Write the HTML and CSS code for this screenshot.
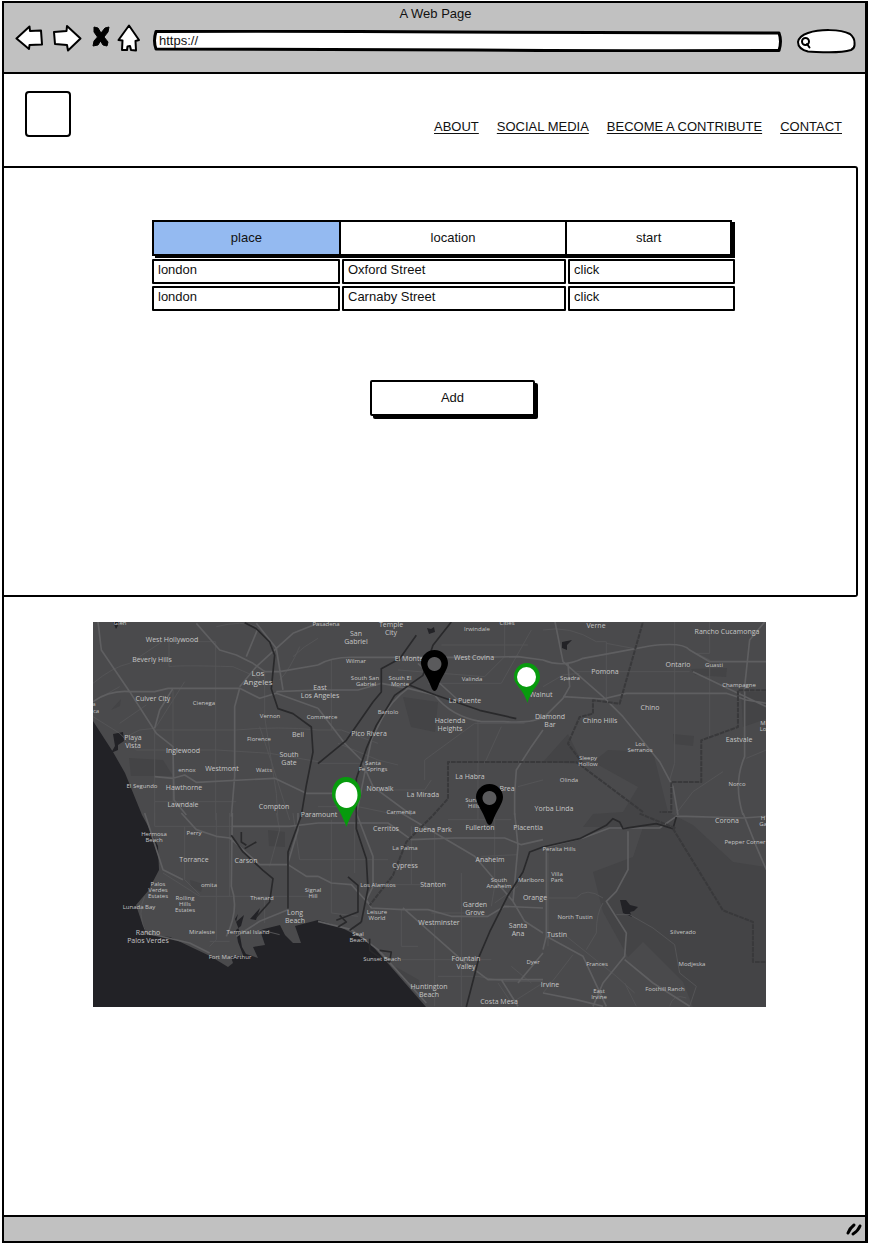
FILE: index.html
```html
<!DOCTYPE html>
<html lang="en">
<head>
<meta charset="utf-8">
<meta name="viewport" content="width=device-width, initial-scale=1">
<title>A Web Page</title>
<link rel="stylesheet" href="styles.css">
</head>
<body>
<div class="browser">
  <header class="chrome">
    <div class="chrome-title">A Web Page</div>
    <div class="toolbar">
      <button class="tool" type="button" aria-label="Back"><svg width="28" height="26" viewBox="0 0 28 26"><path class="ink" d="M1.500 13.500 14.500 1.500 15 6 26 5.500 27 19.500 14.500 20 14 24Z"/></svg></button>
      <button class="tool tool-forward" type="button" aria-label="Forward"><svg width="30" height="28" viewBox="0 0 30 28"><path class="ink" d="M2 8 14.500 7 15 2 28.500 14.500 16 26.500 15 21 3 20Z"/></svg></button>
      <button class="tool tool-stop" type="button" aria-label="Stop"><svg width="18" height="22" viewBox="0 0 18 22"><path class="solid" d="M2 1 6 2 9 7 13 2 17 1 16 6 12 11 16 16 15 20 11 19 8.500 15 6 19 1 20 2 15 5.500 11 2 6Z"/></svg></button>
      <button class="tool" type="button" aria-label="Home"><svg width="24" height="28" viewBox="0 0 24 28"><path class="ink" d="M12 1.500 22 16 18.500 17 19 26.500 14 26 13 22 10.500 22.500 10 26 5 26 5.500 16.500 1.500 16Z"/></svg></button>
      <div class="field address">
        <svg class="outline" viewBox="0 0 628 22" preserveAspectRatio="none" aria-hidden="true"><path class="ink" d="M3 1.500Q160 1 300 2T625 3Q628 11 625 20.500Q460 21 320 20T3 19Q0 11 3 1.500Z"/></svg>
        <input class="box" type="text" aria-label="Address" value="https://">
      </div>
      <div class="field search">
        <svg class="outline" viewBox="0 0 60 25" preserveAspectRatio="none" aria-hidden="true"><path class="ink" d="M12 4C24 0 44 0 54 5Q59 9 58.500 15Q59 19 55 21C42 25 26 23 12 22.500Q2 20 2 13Q3 7 12 4Z"/><circle class="ink" cx="9.500" cy="12.500" r="3.500"/><path class="ink" d="M11 15 13.500 18.500"/></svg>
        <input class="box" type="search" aria-label="Search">
      </div>
    </div>
  </header>

  <div class="page">
    <header class="site-header">
      <div class="logo"></div>
      <nav class="nav">
        <a href="#about">ABOUT</a>
        <a href="#social">SOCIAL MEDIA</a>
        <a href="#contribute">BECOME A CONTRIBUTE</a>
        <a href="#contact">CONTACT</a>
      </nav>
    </header>

    <section class="panel">
      <table class="places">
        <thead><tr><th class="active">place</th><th>location</th><th>start</th></tr></thead>
        <tbody>
          <tr><td>london</td><td>Oxford Street</td><td>click</td></tr>
          <tr><td>london</td><td>Carnaby Street</td><td>click</td></tr>
        </tbody>
      </table>
      <div class="actions"><button class="add" type="button">Add</button></div>
    </section>

    <figure class="map">
      <svg viewBox="0 0 673 385" role="img" aria-label="Map of Los Angeles">
        <rect class="land" width="673" height="385"/>
        <path class="park" d="M500 192 530 190 545 165 500 140 515 128 560 130 575 190 600 203 640 240 673 245V385H600L590 360 550 320 535 335 510 290 500 250 540 235 550 205 490 205ZM450 140 490 142 475 112ZM36 136 70 138 80 154 38 154ZM310 75 345 80 342 110 318 105ZM598 47 634 46 633 55 602 53ZM580 112 601 114 600 124 581 122ZM648 70H673V97L650 105ZM18 88 28 77 27 84ZM97 258 110 262 108 270 98 265ZM175 208 192 210 192 225 176 224ZM303 345 326 358 328 368 309 356Z"/>
        <path class="water" d="M0 99 20 130 32 151 49 193 55 204 65 224 66 248 55 269 43 283 48 298 55 313 77 315 100 326 117 334 135 345 140 341 138 335 150 333 145 320 143 308 148 304 151 293 143 300 145 292 142 297 146 308 149 325 153 332 165 336 160 325 172 323 167 308 187 303 192 313 200 321 208 321 202 304 225 298 245 304 275 319 292 338 312 361 333 385H0ZM20 112 30 110 31 119 25 123 25 128 18 131 22 124ZM20 0H27L23 7ZM469 20 479 18 474 23 474 28 469 26ZM527 278 533 278 537 283 545 285 541 289 537 290 539 295 530 291ZM334 6 338 7 341 5 342 10 336 12ZM157 297 167 286 163 298Z"/>

        <g class="minor" transform="translate(0 -2) scale(.3333)">
          <path d="M228 50V140Q260 135 420 140L500 175M0 190Q60 140 110 130L230 50M228 65H368V600M0 290 80 340 130 390H370L530 400 675 425M185 330H430Q560 318 675 330M185 330V600M240 210V560M185 325 140 330 100 350M430 545H185M515 150V290L550 520 555 600M500 320 540 440 590 600M0 245 80 200M370 20Q450 0 490 20M620 80Q590 150 560 180M675 55Q630 80 600 110"/>
          <path d="M80 310 160 255M190 320 275 185"/>
        </g>
        <g class="minor" transform="translate(225 -2) scale(.3333)">
          <path d="M40 120V330M0 330H70L180 370M0 430H160M60 370 180 420 240 435M320 480V420L470 310H620M480 300V600M240 150 500 170 560 110V0M370 75H630M550 320 500 430M0 560H120L240 585M330 190 550 190 640 30M140 510H320L340 480M600 500 675 480"/>
        </g>
        <g class="minor" transform="translate(450 -2) scale(.3333)">
          <path d="M0 30Q80 15 160 65H190V240M190 70 270 85M100 155H440M395 0V430L380 480M0 200 60 165 110 160M500 0V100H460L500 120V350M670 390 610 415M540 455 450 515 400 580"/>
        </g>
        <g class="minor" transform="translate(0 191) scale(.3333)">
          <path d="M185 0V40H600M370 0V380L350 400M550 0 560 50 530 160M600 0 620 140H675M210 180 320 250H675M275 40V200L320 245M155 250Q130 300 160 360M350 385H410M410 0V250M515 250V330M500 350 560 365"/>
        </g>
        <g class="minor" transform="translate(225 191) scale(.3333)">
          <path d="M40 20V300L120 310M0 140H210M110 30V180M180 215H390M280 40V215M350 50V580M430 180V580M250 440H520M250 290V400H300M530 0V220L520 280M390 20H580M360 490H480L560 505H675M540 510 580 570 675 510M440 300H340M600 220 530 270M580 460 640 510M490 130 600 125"/>
        </g>
        <g class="minor" transform="translate(450 191) scale(.3333)">
          <path d="M15 255H100Q130 220 180 255M15 120V400M180 270Q160 300 160 360L130 410M70 370 220 490 275 540M220 305H260L330 345 395 395 410 480 460 520 440 580M90 425 40 490 0 540M280 580 245 510M380 580Q390 540 430 555"/>
        </g>

        <g class="road" transform="translate(0 -2) scale(.3333)">
          <path d="M15 5 25 90 110 215 190 340 240 380 243 540 280 585M310 10 380 90 430 105 480 130 515 155 560 155 675 135M0 245Q50 210 110 215H185L225 205H440L500 235 550 220 675 265M440 205 425 260 425 470 415 590M185 470 240 475 275 465 310 487 545 475 640 520H675M490 10 550 85 490 140 440 200M675 10 600 40 550 85 570 210M550 215 675 210M240 205 200 270 185 325M495 25 460 110"/>
        </g>
        <g class="road" transform="translate(225 -2) scale(.3333)">
          <path d="M0 135Q40 110 110 112H310L460 112 600 110 675 120M0 210 120 210 190 190 270 205 350 225Q400 290 490 305H560Q650 310 675 290M0 265 80 370 130 420 165 500 280 585M675 330 640 380 595 450 590 520 590 585M270 205Q220 240 190 300L160 360 140 460 115 585M300 130 420 240M0 520H120"/>
        </g>
        <g class="road" transform="translate(450 -2) scale(.3333)">
          <path d="M0 120Q60 145 120 115L230 95 320 78Q420 65 440 90L500 125H670M60 230 180 237 250 220H550L610 240 670 250M35 0 60 125 180 230 240 290 350 425 390 500 405 585M670 0 620 60 605 200 605 410Q570 490 600 585M450 155 670 260M75 130 80 200 60 235 0 295"/>
        </g>
        <g class="road" transform="translate(0 191) scale(.3333)">
          <path d="M265 0 310 50 370 70 410 75 500 155 585 155 640 190 675 190M418 0 415 220Q440 290 400 370M415 40H590L675 30M615 0V50L585 150V290L500 325 430 370M155 0 210 170 270 200M160 360 290 390 350 420"/>
        </g>
        <g class="road" transform="translate(225 191) scale(.3333)">
          <path d="M115 0 165 130 165 220 145 260 160 285 255 290 330 290 400 310H510L560 280 675 285M0 30H210L280 80 410 75 560 75 610 95 675 80M250 0 470 130 585 265 620 325 675 360M255 285 430 440 510 500H675M0 190 40 210 100 215 150 270M0 325 100 350 180 410 325 570M590 0 600 100 585 265M550 500 600 580M675 420 600 510"/>
        </g>
        <g class="road" transform="translate(450 191) scale(.3333)">
          <path d="M0 105 120 75 200 45 350 45 400 10 430 10 600 15 670 10M600 0 640 100 670 170M10 110V370L120 430 190 580M255 55V170L220 235 190 265 215 305 250 360 245 430 180 510 150 580M245 440 330 510 440 580M10 370 0 410M0 540 100 560 180 580"/>
        </g>

        <g class="river" transform="scale(.3333)">
          <path d="M455 2 490 20 530 60 545 100 535 200 555 260 600 275 655 315 660 390 640 490 625 580 585 690V860"/>
          <path d="M675 425 760 355 840 240 865 210 865 140 920 110 970 40M1075 0 1020 70 990 160 905 220 850 310 820 380 790 470V620L820 710 825 800 805 900M950 190 1030 220 1160 265 1270 290M1350 675 1310 690 1290 750 1245 820 1190 930 1160 1000 1120 1155M1350 675 1460 650 1540 610 1560 590 1580 600 1590 620 1690 605 1740 620 1750 585"/>
          <path d="M415 640 450 690 510 745 540 770 530 840 490 885M445 630V660L460 670M455 680 490 660M765 765 795 790V870L730 895M740 880 760 900 735 915M830 950 830 985 865 1010 890 1020 895 990 860 985M805 900 770 925"/>
        </g>
        <g class="border" transform="scale(.3333)">
          <path d="M2019 205H1935V315L1825 355V480H1735V570H1700M1650 570 1450 420H1065V530L1020 580 940 660 900 760 830 850M1470 425 1425 365 1460 285 1500 275V235L1580 245 1650 0M1640 575 1750 620M1740 620 1890 865 1980 900V1020H2019"/>
        </g>

        <g class="labels" transform="translate(-93 -622)">
          <g class="town">
            <text class="city" x="258" y="676">Los</text><text class="city" x="258" y="685">Angeles</text>
            <text x="172" y="642">West Hollywood</text><text x="152" y="662">Beverly Hills</text><text x="153" y="701">Culver City</text>
            <text x="133" y="740">Playa</text><text x="133" y="748">Vista</text><text x="183" y="753">Inglewood</text><text x="222" y="771">Westmont</text>
            <text x="184" y="790">Hawthorne</text><text x="183" y="807">Lawndale</text><text x="274" y="809">Compton</text><text x="298" y="737">Bell</text>
            <text x="289" y="757">South</text><text x="289" y="765">Gate</text><text x="320" y="690">East</text><text x="320" y="698">Los Angeles</text>
            <text x="356" y="636">San</text><text x="356" y="644">Gabriel</text><text x="391" y="627">Temple</text><text x="391" y="635">City</text>
            <text x="409" y="661">El Monte</text><text x="474" y="660">West Covina</text><text x="465" y="703">La Puente</text>
            <text x="450" y="723">Hacienda</text><text x="450" y="731">Heights</text><text x="369" y="736">Pico Rivera</text><text x="380" y="791">Norwalk</text>
            <text x="423" y="797">La Mirada</text><text x="470" y="779">La Habra</text><text x="507" y="791">Brea</text><text x="541" y="697">Walnut</text>
            <text x="550" y="719">Diamond</text><text x="550" y="727">Bar</text><text x="596" y="628">Verne</text><text x="605" y="674">Pomona</text>
            <text x="678" y="667">Ontario</text><text x="727" y="634">Rancho Cucamonga</text><text x="650" y="710">Chino</text><text x="600" y="723">Chino Hills</text>
            <text x="739" y="742">Eastvale</text><text x="554" y="811">Yorba Linda</text><text x="727" y="823">Corona</text><text x="319" y="817">Paramount</text>
            <text x="386" y="831">Cerritos</text><text x="433" y="832">Buena Park</text><text x="480" y="830">Fullerton</text><text x="528" y="830">Placentia</text>
            <text x="490" y="862">Anaheim</text><text x="405" y="868">Cypress</text><text x="433" y="887">Stanton</text><text x="535" y="900">Orange</text>
            <text x="475" y="907">Garden</text><text x="475" y="915">Grove</text><text x="439" y="925">Westminster</text><text x="518" y="928">Santa</text><text x="518" y="936">Ana</text>
            <text x="557" y="937">Tustin</text><text x="466" y="961">Fountain</text><text x="466" y="969">Valley</text><text x="550" y="987">Irvine</text>
            <text x="429" y="989">Huntington</text><text x="429" y="997">Beach</text><text x="499" y="1004">Costa Mesa</text>
            <text x="194" y="862">Torrance</text><text x="246" y="863">Carson</text><text x="295" y="915">Long</text><text x="295" y="923">Beach</text>
            <text x="148" y="935">Rancho</text><text x="148" y="943">Palos Verdes</text>
          </g>
          <g class="district">
            <text x="120" y="625">Glen</text><text x="94" y="706">a</text><text x="96" y="713">ca</text><text x="204" y="705">Cienega</text><text x="270" y="718">Vernon</text><text x="322" y="719">Commerce</text>
            <text x="259" y="741">Florence</text><text x="187" y="772">ennox</text><text x="264" y="772">Watts</text><text x="142" y="788">El Segundo</text>
            <text x="326" y="626">Pasadena</text><text x="356" y="663">Wilmar</text><text x="365" y="680">South San</text><text x="366" y="686">Gabriel</text>
            <text x="400" y="680">South El</text><text x="400" y="686">Monte</text><text x="477" y="631">Irwindale</text><text x="507" y="625">Cities</text>
            <text x="472" y="681">Valinda</text><text x="388" y="714">Bartolo</text><text x="373" y="765">Santa</text><text x="373" y="771">Fe Springs</text>
            <text x="401" y="814">Carmenita</text><text x="405" y="850">La Palma</text><text x="474" y="802">Sunny</text><text x="474" y="808">Hills</text>
            <text x="570" y="680">Spadra</text><text x="714" y="667">Guasti</text><text x="739" y="687">Champagne</text><text x="640" y="746">Los</text><text x="640" y="752">Serranos</text>
            <text x="588" y="760">Sleepy</text><text x="588" y="766">Hollow</text><text x="569" y="782">Olinda</text><text x="737" y="786">Norco</text>
            <text x="763" y="725">M</text><text x="763" y="731">Lo</text><text x="763" y="820">H</text><text x="763" y="826">Ga</text>
            <text x="745" y="844">Pepper Corner</text><text x="559" y="851">Peralta Hills</text><text x="557" y="876">Villa</text><text x="557" y="882">Park</text>
            <text x="499" y="882">South</text><text x="499" y="888">Anaheim</text><text x="531" y="882">Marlboro</text><text x="575" y="919">North Tustin</text>
            <text x="683" y="934">Silverado</text><text x="692" y="966">Modjeska</text><text x="665" y="991">Foothill Ranch</text><text x="597" y="966">Frances</text>
            <text x="533" y="964">Dyer</text><text x="599" y="993">East</text><text x="599" y="999">Irvine</text>
            <text x="154" y="836">Hermosa</text><text x="154" y="842">Beach</text><text x="194" y="835">Perry</text><text x="158" y="886">Palos</text><text x="158" y="892">Verdes</text><text x="158" y="898">Estates</text>
            <text x="185" y="900">Rolling</text><text x="185" y="906">Hills</text><text x="185" y="912">Estates</text><text x="209" y="887">omita</text><text x="262" y="900">Thenard</text>
            <text x="139" y="909">Lunada Bay</text><text x="202" y="934">Miraleste</text><text x="248" y="934">Terminal Island</text><text x="230" y="959">Fort MacArthur</text>
            <text x="313" y="892">Signal</text><text x="313" y="898">Hill</text><text x="378" y="887">Los Alamitos</text><text x="377" y="914">Leisure</text><text x="377" y="920">World</text>
            <text x="358" y="936">Seal</text><text x="358" y="942">Beach</text><text x="382" y="961">Sunset Beach</text>
          </g>
        </g>

        <g transform="translate(-93 -622)">
          <circle class="pin-hole" cx="434.500" cy="664" r="8"/>
          <path class="pin" fill-rule="evenodd" d="M434.500 650C427 650 421 656 421 663C421 670 427 675 432 689Q434.500 693 437 689C442 675 448 670 448 663C448 656 442 650 434.500 650ZM434.500 657A7 7 0 1 1 434.400 657Z"/>
          <circle class="pin-hole" cx="489.500" cy="798" r="8"/>
          <path class="pin" fill-rule="evenodd" d="M489.500 784C482 784 476 790 476 797C476 804 482 809 487 823Q489.500 827 492 823C497 809 503 804 503 797C503 790 497 784 489.500 784ZM489.500 791A7 7 0 1 1 489.400 791Z"/>
          <path class="pin-open" d="M346 777C338 777 332 784 332 794C332 803 340 808 346.500 827C353 808 361 803 361 794C361 784 354 777 346 777Z"/>
          <ellipse class="pin-eye" cx="346.500" cy="795" rx="11" ry="13"/>
          <path class="pin-open" d="M527 663C520 663 514 669 514 677C514 685 523 688 527.500 703C532 688 540 685 540 677C540 669 534 663 527 663Z"/>
          <ellipse class="pin-eye" cx="526.500" cy="677" rx="9.500" ry="10"/>
        </g>
      </svg>
    </figure>
  </div>

  <footer class="status">
    <svg width="18" height="16" viewBox="0 0 18 16" aria-hidden="true"><path class="grip" d="M3 12Q5 7 9 4M8 13Q13 10 15 5"/></svg>
  </footer>
</div>
</body>
</html>
```
FILE: styles.css
```css
* { box-sizing: border-box; }

body {
  margin: 0;
  background: #fff;
  color: #111;
  font: 13px/18px "Liberation Sans", Arial, sans-serif;
}

.browser {
  display: flex;
  flex-direction: column;
  min-height: calc(100vh - 2px);
  margin: 1px 1px 1px 2px;
  border: 2px solid #000;
  border-right-width: 3px;
}

.ink { fill: #fff; stroke: #000; stroke-width: 2; stroke-linejoin: round; stroke-linecap: round; vector-effect: non-scaling-stroke; }
.solid { fill: #000; stroke: #000; stroke-linejoin: round; }

.chrome {
  padding: 2px 9px 19px 11px;
  background: #c1c1c1;
  border-bottom: 2px solid #000;
}
.chrome-title { text-align: center; }
.toolbar { display: flex; align-items: center; height: 30px; }
.tool { display: flex; padding: 0; border: 0; background: none; }
.tool-forward { margin-left: 9px; }
.tool-stop { margin: 0 7px 2px 10px; }
.field { position: relative; display: flex; }
.address { flex: 1; height: 22px; margin: 6px 0 0 12px; }
.search { width: 60px; height: 25px; margin: 6px 0 0 14px; }
.outline { position: absolute; inset: 0; width: 100%; height: 100%; }
.address .ink { stroke-width: 3; }
.box {
  position: relative;
  width: 100%;
  padding: 0 6px;
  border: 0;
  background: none;
  color: inherit;
  font: inherit;
}
.search .box { padding-left: 18px; }

.page { flex: 1; }

.site-header {
  display: flex;
  justify-content: space-between;
  height: 92px;
  padding: 17px 23px 0 21px;
}
.logo { width: 46px; height: 46px; border: 2px solid #000; border-radius: 4px; }
.nav { display: flex; gap: 18px; padding-top: 27px; }
.nav a { color: inherit; text-underline-offset: 2px; }

.panel {
  min-height: 431px;
  margin-right: 7px;
  padding: 52px 121px 0 148px;
  border: 2px solid #000;
  border-left: 0;
  border-radius: 0 3px 3px 0;
}

.places, .places thead, .places tbody { display: block; }
.places tr { display: grid; }
.places thead tr {
  grid-template-columns: 185fr 227fr 165fr;
  margin-right: 3px;
  border: 2px solid #000;
  box-shadow: 3px 2px 0 #000;
}
.places th { padding: 6px 0; line-height: 20px; font-weight: normal; text-align: center; }
.places th + th { border-left: 2px solid #000; }
.places .active { background: #94baf1; }
.places tbody { display: grid; gap: 2px; margin-top: 3px; }
.places tbody tr { grid-template-columns: 188fr 224fr 167fr; gap: 2px; }
.places td { height: 25px; padding: 0 4px; border: 2px solid #000; border-radius: 1px; }

.actions { padding: 69px 0 0 18px; text-align: center; }
.add {
  width: 165px;
  height: 36px;
  padding: 0;
  border: 2px solid #000;
  border-radius: 2px;
  background: #fff;
  box-shadow: 3px 3px 0 #000;
  color: inherit;
  font: inherit;
}

.map { margin: 25px 99px 25px 89px; }
.map svg { display: block; width: 100%; height: auto; }
.land { fill: #4a4a4c; }
.park { fill: #444446; }
.water { fill: #222226; }
.minor, .road, .river, .border { fill: none; stroke-linejoin: round; }
.minor { stroke: #545456; stroke-width: 3; }
.road { stroke: #5f5f61; stroke-width: 5; }
.river { stroke: #29292b; stroke-width: 5; }
.border { stroke: #39393b; stroke-width: 6; stroke-dasharray: 14 3; }
.labels { fill: #c6c6c6; font-family: "Open Sans", "Noto Sans", sans-serif; text-anchor: middle; }
.town { font-size: 7px; }
.city { font-size: 8px; }
.district { font-size: 6px; }
.pin { fill: #000; }
.pin-hole { fill: #5a5a5c; }
.pin-open { fill: #079b0d; }
.pin-eye { fill: #fff; }

.status {
  display: flex;
  align-items: center;
  justify-content: flex-end;
  height: 26px;
  padding-right: 2px;
  background: #c1c1c1;
  border-top: 2px solid #000;
}
.grip { fill: none; stroke: #000; stroke-width: 3; stroke-linecap: round; }
```
